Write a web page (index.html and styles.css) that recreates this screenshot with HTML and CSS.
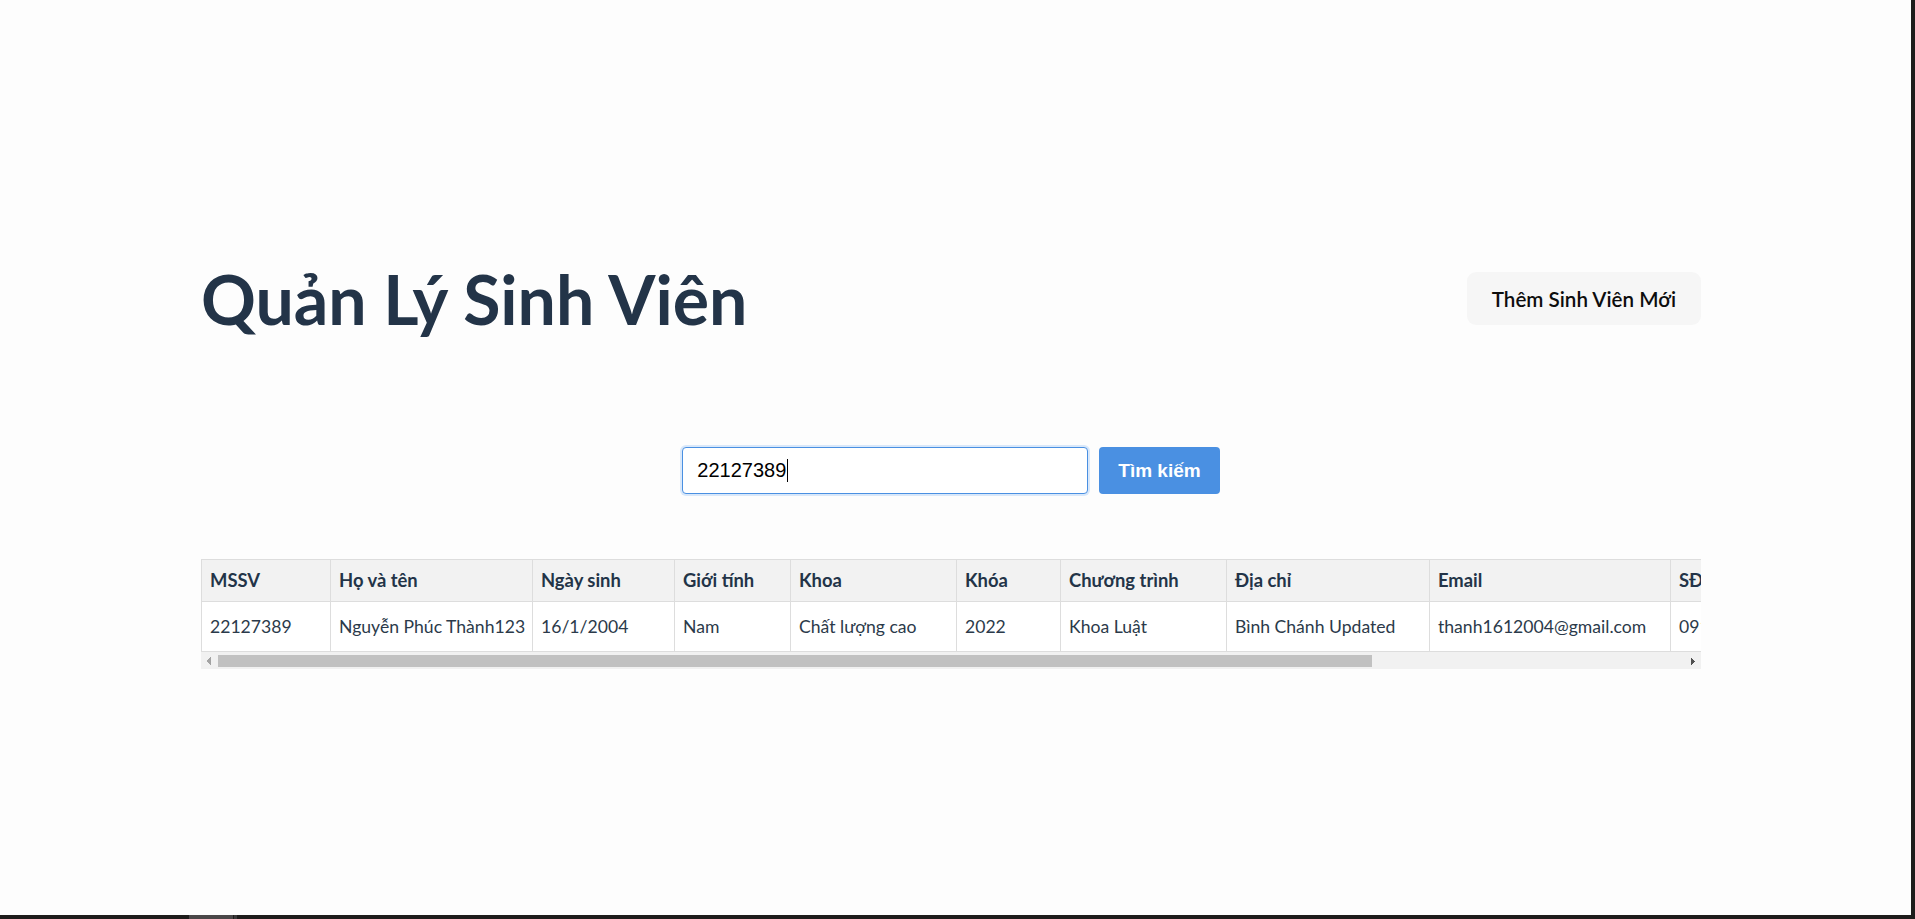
FILE: index.html
```html
<!DOCTYPE html>
<html lang="vi">
<head>
<meta charset="utf-8">
<title>Quản Lý Sinh Viên</title>
<link rel="stylesheet" href="styles.css">
</head>
<body>
<div class="screen">
  <main class="page">
    <header class="topbar">
      <h1 class="title">Quản Lý Sinh Viên</h1>
      <button class="btn-add" type="button">Thêm Sinh Viên Mới</button>
    </header>
    <form class="search">
      <div class="search-box"><span class="search-value">22127389</span><span class="caret"></span></div>
      <button class="btn-search" type="button">Tìm kiếm</button>
    </form>
    <div class="table-wrap">
      <table class="students">
        <colgroup>
          <col class="c-mssv"><col class="c-name"><col class="c-dob"><col class="c-sex"><col class="c-faculty"><col class="c-year"><col class="c-program"><col class="c-addr"><col class="c-email"><col class="c-phone"><col class="c-status">
        </colgroup>
        <thead>
          <tr>
            <th>MSSV</th><th>Họ và tên</th><th>Ngày sinh</th><th>Giới tính</th><th>Khoa</th><th>Khóa</th><th>Chương trình</th><th>Địa chỉ</th><th>Email</th><th>SĐT</th><th>Tình trạng</th>
          </tr>
        </thead>
        <tbody>
          <tr>
            <td>22127389</td><td>Nguyễn Phúc Thành123</td><td>16/1/2004</td><td>Nam</td><td>Chất lượng cao</td><td>2022</td><td>Khoa Luật</td><td>Bình Chánh Updated</td><td>thanh1612004@gmail.com</td><td>0912345678</td><td>Đang học</td>
          </tr>
        </tbody>
      </table>
    </div>
    <div class="hscroll">
      <span class="sb-btn sb-left"></span>
      <div class="sb-track"><span class="sb-thumb"></span></div>
      <span class="sb-btn sb-right"></span>
    </div>
  </main>
  <div class="taskbar"><span class="tb-item"></span><span class="tb-mark"></span></div>
</div>
</body>
</html>
```
FILE: styles.css
```css
html, body {
  margin: 0;
  padding: 0;
  background: #1e1c1b;
}
.screen {
  width: 1915px;
  height: 919px;
  display: flex;
  flex-direction: column;
  overflow: hidden;
}
.page {
  box-sizing: border-box;
  width: 1911px;
  height: 915px;
  background: #fdfdfd;
  padding: 272px 0 0 201px;
  font-family: Lato, "Noto Sans", sans-serif;
  color: #243447;
}
.taskbar {
  height: 4px;
  display: flex;
  padding-left: 189px;
}
.tb-item {
  width: 44px;
  background: #4a4748;
}
.tb-mark {
  width: 3px;
  margin-left: 1px;
  background: #3a3839;
}
.topbar {
  width: 1500px;
  height: 53px;
  display: flex;
  justify-content: space-between;
  align-items: center;
}
.title {
  margin: 0;
  font-size: 68px;
  font-weight: 700;
  line-height: 1;
  color: #233448;
}
.btn-add {
  height: 53px;
  padding: 0 25px;
  border: none;
  border-radius: 9px;
  background: #f6f6f6;
  color: #0d0d0d;
  font-family: Lato, "Noto Sans", sans-serif;
  font-size: 20.6px;
  font-weight: 600;
}
.search {
  width: 1500px;
  margin-top: 122px;
  display: flex;
  justify-content: center;
  gap: 11px;
}
.search-box {
  box-sizing: border-box;
  width: 406px;
  height: 47px;
  padding: 0 14px;
  display: flex;
  align-items: center;
  border: 1px solid #4a90e2;
  border-radius: 4px;
  box-shadow: 0 0 0 2px #d9e8fa;
  font-family: "Liberation Sans", Arial, sans-serif;
  font-size: 20px;
  color: #000;
  background: #fff;
}
.caret {
  width: 1px;
  height: 23px;
  margin-left: 1px;
  background: #000;
}
.btn-search {
  box-sizing: border-box;
  height: 47px;
  padding: 0 19px;
  border: none;
  border-radius: 4px;
  background: #4a90e2;
  color: #fff;
  font-family: "Liberation Sans", Arial, sans-serif;
  font-size: 19px;
  font-weight: 700;
}
.table-wrap {
  width: 1500px;
  margin-top: 65px;
  overflow: hidden;
}
.students {
  table-layout: fixed;
  width: 1909px;
  border-collapse: collapse;
  font-size: 17.6px;
}
.c-mssv { width: 129px; }
.c-name { width: 202px; }
.c-dob { width: 142px; }
.c-sex { width: 116px; }
.c-faculty { width: 166px; }
.c-year { width: 104px; }
.c-program { width: 166px; }
.c-addr { width: 203px; }
.c-email { width: 241px; }
.c-phone { width: 140px; }
.c-status { width: 300px; }
.students th,
.students td {
  border: 1px solid #dddddd;
  text-align: left;
  white-space: nowrap;
  overflow: hidden;
  line-height: 25px;
}
.students th {
  padding: 8px 8px;
  background: #f2f2f2;
  font-size: 18.4px;
  font-weight: 700;
  color: #233448;
}
.students td {
  padding: 12px 8px;
  color: #2b3a4a;
  background: #fff;
}
.hscroll {
  width: 1500px;
  height: 17px;
  display: flex;
  background: #f1f1f1;
}
.sb-btn {
  flex: none;
  width: 17px;
  height: 17px;
  background-repeat: no-repeat;
  background-size: 4px 4px, 4px 4px;
}
.sb-left {
  background-image:
    linear-gradient(to bottom right, transparent 50%, #a3a3a3 50%),
    linear-gradient(to top right, transparent 50%, #a3a3a3 50%);
  background-position: 6px 5px, 6px 9px;
}
.sb-right {
  background-image:
    linear-gradient(to bottom left, transparent 50%, #505050 50%),
    linear-gradient(to top left, transparent 50%, #505050 50%);
  background-position: 7px 5px, 7px 9px;
}
.sb-track {
  flex: 1;
  box-sizing: border-box;
  padding: 3px 0 2px;
  display: flex;
}
.sb-thumb {
  width: 1154px;
  background: #c1c1c1;
}
```
